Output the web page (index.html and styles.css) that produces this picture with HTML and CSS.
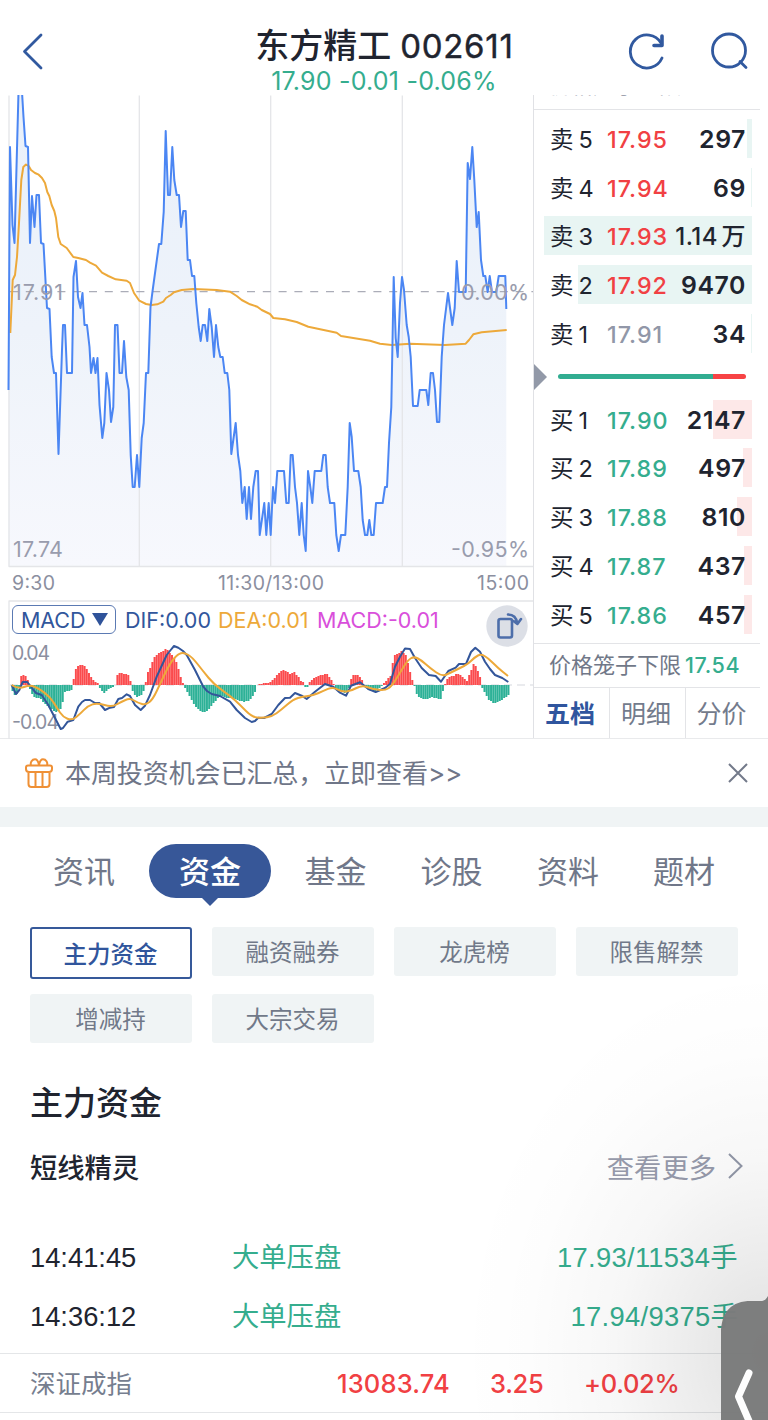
FILE: index.html
```html
<!DOCTYPE html>
<html lang="zh-CN">
<head>
<meta charset="utf-8">
<title>东方精工 002611</title>
<link rel="stylesheet" href="styles.css">
</head>
<body>
<div class="app">
  <header class="header">
    <svg class="back" width="24" height="40" viewBox="0 0 24 40"><path d="M20 4 3.500 20.500 20 37"/></svg>
    <div class="title">
      <h1>东方精工 <span class="code">002611</span></h1>
      <p>17.90 -0.01 -0.06%</p>
    </div>
    <div class="actions">
      <svg width="40" height="40" viewBox="0 0 40 40"><path d="M35 27A16.500 16.500 0 1 1 34 12"/><path d="M35 5v9.500H27" stroke-width="3.600"/></svg>
      <svg width="40" height="40" viewBox="0 0 40 40"><circle cx="19" cy="19.500" r="16.500"/><path d="m30 30.500 6 6"/></svg>
    </div>
  </header>

  <main class="market">
    <section class="charts">
      <svg class="chart" width="533" height="644" viewBox="0 95 533 644">
        <defs>
          <linearGradient id="area" x1="0" y1="95" x2="0" y2="566" gradientUnits="userSpaceOnUse">
            <stop offset="0" stop-color="#e9f0fa"/><stop offset=".5" stop-color="#eef3fa"/><stop offset="1" stop-color="#f7f8fd"/>
          </linearGradient>
        </defs>
        <path id="fill" fill="url(#area)"/>
        <path class="grid" d="M9 95.500V566.500H533M139.300 95.500V566M270.700 95.500V566M402.300 95.500V566M9 739V601H533"/>
        <path class="zero" d="M10 291.700H533"/>
        <polyline class="average" points="10.300,333 12.700,280 15,275 17,257 19,223 21.300,180 23.300,167 26,164.500 28.700,166 31,170 35,173 38.700,174.700 42,178 45,183 47.300,192 49.300,196 51.700,205 54.300,211 56,218 58.300,237 60.700,244 66.700,248 73.300,257 78.300,258 86,260 90,262.700 96,265.700 102,272.700 108.300,276 115.700,279.300 126.700,280.700 130,283 134,293 139.300,300.700 146,304 151.700,305 157.300,304.300 163.300,301.700 166,298 170.700,295 174,292.300 181.700,290 193.300,289 216.700,290 230,291.700 236.700,296 241.700,300 250,304.300 257.300,306.700 261.700,310 270,314 273.300,318 285,319.300 296.700,322 308.300,326.700 336.700,332.700 341,336 370,340.700 380,343.700 391.700,345 410,343.700 445,345 465.700,343.700 469,340 473.300,334.300 481.700,332.300 506.700,330"/>
        <polyline id="price" class="price" points="8.500,390 10,147 12.500,225 14.500,243 18.500,92 22,92 23.500,117 25.500,146 28,147 30,243 32,196 34.500,227 36.500,195 39,195 41,243 43.500,244 47,308 49.500,309 51.700,357 54,373 56,373 58.500,454 62,350 63,325 65,325 67,373 72,373 73.500,277 76,261 78,297 80.500,308 82.500,293 84.500,325 87,325 89.500,347 91,373 93.500,358 95.500,373 97.500,358 99.500,405 102.300,438 104.300,423 106.500,373 109,390 111,422 113.300,407 115,325 117.500,325 119.500,373 122,373 124,341 126.300,377 128.700,390 130.700,455 132.700,487 134.700,487 137,455 139.300,487 141.700,438 143.700,423 146,373 148.300,373 150.500,307 152.700,290 159,244 161.300,244 163.700,212 165.700,131 168,195 170,195 172.300,147 174.300,180 176.700,195 179,195 181,227 183.300,211 185.700,211 187.700,260 190,260 192,276 194.300,276 196.300,303 198.700,327 200.700,341 202.700,325 205,325 207.300,341 209.300,309 211.700,327 214,357 216,325 218.300,347 220.300,357 222.700,357 224.700,373 227.300,373 229.300,390 231.300,454 235.700,423 238,455 240.300,471 242.300,503 244.700,487 246.700,519 249,487 251,519 253.300,487 255.700,471 258,471 259.700,535 264.300,503 266.300,535 268.700,503 270.700,535 273,487 275,503 277.300,471 284,471 286.300,503 288.700,503 290.700,455 292.700,455 295,487 297,503 299.300,535 301.700,503 303.700,535 305.700,551 308,471 310.300,487 312.300,503 314.700,471 321.300,471 323.300,455 325.700,455 327.700,487 330,503 334.300,503 336.300,535 338.700,551 341,535 345.300,535 347.700,487 349.700,423 351.700,437 354,471 358.300,471 360.700,487 362.700,520 365,535 367.300,535 369.300,520 371.300,535 373.700,535 376,503 382.700,503 385,487 387,487 389,443 391.300,407 393.700,277 395.700,338 397.700,357 400,303 402,277 404,290 406.700,325 408.700,337 410.700,357 413,406 417.700,406 419.700,390 426.300,390 428.300,405 430.700,373 433,373 435,390 437,422 439.300,422 441.700,357 444,325 448,293 452.300,325 454.700,308 456.700,261 459,292 465.700,292 467.700,163 470,179 472.300,147 474.300,180 476.700,227 478.700,212 481,260 483.300,276 485.300,276 487.700,292 489.700,276 492,292 496.300,292 498.700,276 505.300,276 506.300,309"/>
        <g class="label">
          <text x="13" y="299.500" textLength="50">17.91</text>
          <text x="461" y="299.500" textLength="68">0.00%</text>
          <text x="13" y="557" textLength="50">17.74</text>
          <text x="451" y="557" textLength="78">-0.95%</text>
        </g>
        <g class="label time">
          <text x="12" y="590" textLength="43">9:30</text>
          <text x="218" y="590" textLength="106">11:30/13:00</text>
          <text x="477" y="590" textLength="52">15:00</text>
          <text x="12" y="660" textLength="38">0.04</text>
          <text x="12" y="729" textLength="47">-0.04</text>
        </g>
        <path d="M10 685H533" stroke="#e4e5e9" stroke-width="1.500" stroke-dasharray="8 5"/>
        <path id="rise" stroke="#fb4b4d" stroke-width="1.950"/>
        <path id="fall" stroke="#2db197" stroke-width="1.950"/>
        <polyline class="dif" points="11.700,685 16,694 19.300,690 22.700,682 27.300,682 32.700,689 36,693 41.700,695 48.300,705 55,718 60.700,729 63,728 67.700,721.700 73.300,720 78.300,706.700 82,702 85,700 90,700 95,703 99.300,703 105,710 110,707.700 114,707 118.300,699 122,698 126.700,694.300 130,696 135,705 140.700,710 145,705.700 150,695 156.700,676.700 163,663 166.700,655 170.700,650 174,646 178.300,647.700 183,651 186.700,655 195,670 203.300,686.700 207,691 211.700,694 220,696 230,701.700 236.700,710 245,718 251.700,722 255,721 258.300,717.700 264,718 268,716 271.700,714 278.300,705 285,698 290,697.700 295,693 301.700,695.700 306.700,699 315,691.700 325,684 333.300,686.700 340,692.700 346,695.700 351,685.700 360,682.300 368.300,689 375.700,692 385,688 390,684 395,666.700 400,656.700 405,648.500 410,649 415,658 421.700,668 429,675 435.700,676 441,681.700 448.300,671 455.700,667.700 459,664 466,664 471,652 475.300,647.700 480,651.700 485,661.700 490,669 495,675 502.300,678 508.300,682"/>
        <path id="dea" class="average"/>
      </svg>
      <div class="indicator">
        <button class="select">MACD <svg width="16" height="13" viewBox="0 0 16 13"><path d="M0 0H16L8 13Z" fill="#2f539a"/></svg></button>
        <span class="v-dif">DIF:0.00</span>
        <span class="v-dea">DEA:0.01</span>
        <span class="v-macd">MACD:-0.01</span>
      </div>
      <svg class="rotate" width="42" height="42" viewBox="0 0 42 42"><circle cx="21" cy="21" r="20.700" fill="#dcdfe6"/><rect x="12.500" y="14" width="13.500" height="18.500" rx="2" class="ln"/><path class="ln" d="M22 9.500c5.500 0 8.500 3 9.300 9M27.500 16l3.900 2.900L35 14"/></svg>
    </section>

    <aside class="book">
      <div class="cage-top"><span>价格笼子上限</span></div>
      <div class="levels sells">
        <div class="row"><i style="width:5px"></i><span>卖 5</span><b>17.95</b><em>297</em></div>
        <div class="row"><i style="width:1px"></i><span>卖 4</span><b>17.94</b><em>69</em></div>
        <div class="row"><i style="width:208px"></i><span>卖 3</span><b>17.93</b><em class="wan">1.14 万</em></div>
        <div class="row"><i style="width:174px"></i><span>卖 2</span><b>17.92</b><em>9470</em></div>
        <div class="row"><i style="width:1px"></i><span>卖 1</span><b class="flat">17.91</b><em>34</em></div>
      </div>
      <div class="ratio"><svg class="mark" width="13" height="26" viewBox="0 0 13 26"><path d="M0 0 13 13 0 26Z" fill="#9299a8"/></svg><div class="track"></div></div>
      <div class="levels buys">
        <div class="row"><i style="width:39px"></i><span>买 1</span><b>17.90</b><em>2147</em></div>
        <div class="row"><i style="width:9px"></i><span>买 2</span><b>17.89</b><em>497</em></div>
        <div class="row"><i style="width:15px"></i><span>买 3</span><b>17.88</b><em>810</em></div>
        <div class="row"><i style="width:8px"></i><span>买 4</span><b>17.87</b><em>437</em></div>
        <div class="row"><i style="width:8px"></i><span>买 5</span><b>17.86</b><em>457</em></div>
      </div>
      <div class="cage">价格笼子下限<b>17.54</b></div>
      <nav class="book-tabs"><a class="on">五档</a><a>明细</a><a>分价</a></nav>
    </aside>
  </main>

  <div class="notice">
    <svg width="28" height="30" viewBox="0 0 28 30"><path d="M3 7.500H25Q27 7.500 27 9.500V11Q27 14 24 14H4Q1 14 1 11V9.500Q1 7.500 3 7.500ZM3.500 14V26Q3.500 29 6.500 29H21.500Q24.500 29 24.500 26V14M10.500 14V29M17.500 14V29M6 7.500C5 4.500 7 1.200 10 1.200S13.500 4 14 7.500C14.500 4 15 1.200 18 1.200S23 4.500 22 7.500"/></svg>
    <span>本周投资机会已汇总，立即查看&gt;&gt;</span>
    <svg class="close" width="20" height="20" viewBox="0 0 20 20"><path d="m1 1 18 18M19 1 1 19"/></svg>
  </div>
  <div class="gap"></div>

  <nav class="tabs"><a>资讯</a><a class="on">资金</a><a>基金</a><a>诊股</a><a>资料</a><a>题材</a></nav>
  <nav class="chips"><a class="on">主力资金</a><a>融资融券</a><a>龙虎榜</a><a>限售解禁</a><a>增减持</a><a>大宗交易</a></nav>

  <section class="funds">
    <h2>主力资金</h2>
    <div class="sub"><h3>短线精灵</h3><a>查看更多 <svg width="15" height="26" viewBox="0 0 15 26"><path d="m1 1 12.500 12L1 25"/></svg></a></div>
    <div class="deal"><time>14:41:45</time><span>大单压盘</span><b>17.93/11534手</b></div>
    <div class="deal"><time>14:36:12</time><span>大单压盘</span><b>17.94/9375手</b></div>
  </section>
  <footer class="index"><span>深证成指</span><b>13083.74</b><b>3.25</b><b>+0.02%</b></footer>

  <div class="shade"></div>
  <svg class="drawer" width="48" height="126" viewBox="0 0 48 126"><path d="M0 126V40C0 17 11 7 30 7H41Q45 7 48 0V126Z" fill="#7b7c7c"/><path d="M28 79 17.500 102.500 28 127" fill="none" stroke="#fff" stroke-width="7" stroke-linecap="round" stroke-linejoin="round"/></svg>
</div>
<script src="chart.js"></script>
</body>
</html>
```

FILE: styles.css
```css
* { box-sizing: border-box; }
body { margin: 0; background: #fff; color: #20242f; font-family: Inter, "Noto Sans CJK SC", sans-serif; }
h1, h2, h3, p { margin: 0; font-weight: 400; }
b, em, i { font-style: normal; }
.app { position: relative; width: 768px; height: 1420px; overflow: hidden; display: flex; flex-direction: column; }
.app > * { flex-shrink: 0; }

.header { height: 95px; display: grid; grid-template-columns: 180px 408px 180px; }
.header svg { fill: none; stroke: #31599f; stroke-width: 2.8; stroke-linecap: round; stroke-linejoin: round; }
.back { margin: 31px 0 0 21px; }
.title { text-align: center; padding-top: 23px; }
.title h1 { font-size: 34px; line-height: 45px; font-weight: 500; white-space: nowrap; }
.title .code { font-size: 33px; font-weight: 400; letter-spacing: .7px; margin-right: -.7px; -webkit-text-stroke: .4px; }
.title p { font-size: 25px; line-height: 25px; color: #35ad8e; letter-spacing: .22px; }
.actions { display: flex; gap: 43px; padding: 31px 0 0 39px; }

.market { height: 644px; display: grid; grid-template-columns: 533px 235px; border-bottom: 1px solid #e9eaec; }
.charts { position: relative; height: 644px; }
.chart { display: block; }
.chart path, .chart polyline { stroke-linejoin: round; }
.grid { fill: none; stroke: #e4e5e8; stroke-width: 1.3; }
.zero { stroke: #abadb8; stroke-width: 1.3; stroke-dasharray: 8 7.8; }
.price { fill: none; stroke: #4b86f3; stroke-width: 2; }
.average { fill: none; stroke: #eda93a; stroke-width: 2; }
.dif { fill: none; stroke: #33569a; stroke-width: 2; }
.label { font-size: 21.5px; fill: #999cad; }
.time { font-size: 19.5px; fill: #8b8f9f; }
.indicator { position: absolute; left: 12px; top: 510px; display: flex; align-items: center; height: 29px; font-size: 21.5px; white-space: nowrap; }
.select { display: flex; flex-shrink: 0; align-items: center; gap: 7px; width: 104px; height: 29px; padding: 0 0 0 8px; margin-right: 9px; border: 1.5px solid #5b7ab3; border-radius: 6px; background: #fff; color: #31569c; font: inherit; letter-spacing: -.1px; }
.select svg { flex-shrink: 0; }
.v-dif { width: 93px; color: #31569c; }
.v-dea { width: 99px; color: #eda93a; }
.v-macd { color: #d94fdb; }
.rotate { position: absolute; left: 486px; top: 510px; }
.ln { fill: none; stroke: #4d6eaa; stroke-width: 2.6; stroke-linecap: round; stroke-linejoin: round; }

.book { border-left: 1.3px solid #e0e1e5; display: flex; flex-direction: column; height: 643px; }
.book > * { flex-shrink: 0; }
.cage-top { height: 15px; width: 226px; border-bottom: 1px solid #e3e4e7; position: relative; }
.cage-top span { position: absolute; left: 15px; top: -26px; font-size: 22px; line-height: 32px; color: #8b8f9f; clip-path: inset(26px 0 0 0); }
.levels { display: grid; grid-auto-rows: 39px; row-gap: 9.7px; padding: 9px 0 0; }
.row { position: relative; width: 208px; margin-left: 10px; display: grid; grid-template-columns: 57px 62px 83px; padding: 2px 0 0 6px; align-items: center; line-height: 37px; white-space: nowrap; }
.row i { position: absolute; right: 0; top: 0; height: 39px; background: #e8f5f3; }
.buys .row i { background: #fde8e8; }
.row span, .row b, .row em { position: relative; }
.row span { font-size: 23.5px; word-spacing: -1.5px; }
.row b { font-size: 23.3px; font-weight: 500; color: #f14043; letter-spacing: 1px; }
.row em { font-size: 24.8px; font-weight: 600; text-align: right; margin-left: -16px; width: 93px; letter-spacing: .6px; }
.row .wan { font-size: 24px; font-weight: 500; word-spacing: -3px; letter-spacing: .4px; }
.row .flat { color: #9197a8; }
.buys b, .cage b { color: #35ad8e; }
.ratio { height: 47px; position: relative; padding: 21px 0 0 24px; }
.mark { position: absolute; left: 0; top: 11px; }
.track { width: 188px; height: 5.5px; border-radius: 3px; background: linear-gradient(90deg, #31ad91 82.3%, #f74345 82.3%); }
.buys { padding-top: 0; }
.cage { width: 226px; height: 45px; margin-top: 9px; border-top: 1.3px solid #e3e4e7; border-bottom: 1.3px solid #e3e4e7; padding-left: 15px; font-size: 22px; line-height: 43px; color: #717888; white-space: nowrap; }
.cage b { font-size: 21.5px; font-weight: 500; margin-left: 4px; letter-spacing: .6px; }
.book-tabs { display: grid; grid-template-columns: 75px 76px 75px; height: 50px; font-size: 25px; line-height: 52px; text-align: center; color: #737b8c; }
.book-tabs a { height: 50px; padding-right: 3px; }
.book-tabs a + a { border-left: 1.3px solid #e3e4e7; }
.book-tabs .on { color: #2f559e; font-weight: 700; }

.notice { height: 68px; display: flex; align-items: center; padding: 0 20px 0 25px; font-size: 26px; color: #6f7688; }
.notice svg { fill: none; stroke: #ef9035; stroke-width: 2; }
.notice span { margin-left: 12px; padding-bottom: 3px; letter-spacing: -.08px; }
.notice .close { margin-left: auto; stroke: #737a8a; }
.gap { height: 20px; background: #f0f4f5; }

.tabs { height: 100px; padding: 17px 26px 0; display: grid; grid-template-columns: 116px 136px 115px 117px 116px 116px; font-size: 31px; line-height: 56px; text-align: center; color: #707789; }
.tabs a { height: 54px; }
.tabs .on { position: relative; justify-self: center; width: 122px; border-radius: 27px; background: #375798; color: #fff; font-weight: 500; }
.tabs .on::after { content: ""; position: absolute; left: 52px; top: 53px; border: 9px solid transparent; border-top-color: #375798; border-bottom: 0; }
.chips { height: 117px; padding: 0 30px; display: grid; grid-template-columns: repeat(4, 162px); grid-auto-rows: 49px; gap: 18px 20px; font-size: 23.5px; line-height: 52px; text-align: center; color: #717989; }
.chips a { background: #f0f4f5; border-radius: 3px; padding-right: 1px; }
.chips .on { height: 52px; background: #fff; border: 2px solid #36599a; color: #30559c; font-weight: 500; line-height: 51px; }

.funds { height: 309px; padding: 35px 30px 0; }
h2 { font-size: 33px; line-height: 48px; font-weight: 500; }
.sub { display: flex; justify-content: space-between; align-items: center; margin-top: 19px; height: 40px; margin-right: -5px; }
h3 { font-size: 27.3px; font-weight: 500; }
.sub a { display: flex; align-items: center; gap: 12px; font-size: 27.3px; color: #979bac; }
.sub svg { fill: none; stroke: #9298a8; stroke-width: 2; }
.deal { display: grid; grid-template-columns: 202px 190px 1fr; align-items: center; height: 59px; font: 27.3px/59px "Liberation Sans", "Noto Sans CJK SC", sans-serif; }
.sub + .deal { margin-top: 42px; }
.deal span, .deal b { color: #35ad8e; font-weight: 400; }
.deal b { text-align: right; letter-spacing: .32px; }
.index { height: 60px; border-top: 1.3px solid #e4e6e8; border-bottom: 1.3px solid #e4e6e8; padding: 0 30px 3px; display: grid; grid-template-columns: 307px 153px 94px 1fr; align-items: center; font-size: 25.5px; color: #767e8f; }
.index b { color: #f14043; font-weight: 500; padding-top: 3px; letter-spacing: .15px; }
.index b + b { letter-spacing: -.3px; }

.shade { position: absolute; right: 0; bottom: 0; width: 400px; height: 450px; background: radial-gradient(ellipse 310px 390px at 100% 85%, rgba(0,0,0,.12), rgba(0,0,0,.075) 25%, rgba(0,0,0,.03) 50%, rgba(0,0,0,.008) 78%, transparent); }
.drawer { position: absolute; right: -1px; bottom: 0; opacity: .98; }
```

FILE: chart.js
```javascript
// Close the price line down to the axis to make the shaded area.
const price = document.getElementById('price').getAttribute('points');
document.getElementById('fill').setAttribute('d', 'M8.5,566 L' + price + ' L506.3,566 Z');

// MACD histogram envelope: x position, bar height.
const macd = [[12,-5],[15.5,-12],[18,-6],[20,2],[21.5,10],[25,10],[27.5,6],[29,-1],[31,-8],[35,-13],[40,-13],[45,-19],[50,-23],[55,-27],[60,-26],[62.5,-18],[65,-7],[72,-5],[73,-2],[74,10],[77,19],[82,20],[86,18],[89,12],[92,6],[96,3],[99,2],[100,-3],[104,-8],[107,-6],[110,-3],[115,-2],[116,8],[119,12],[125,11],[129,10],[131,2],[133,-7],[136,-12],[141,-11],[144,-5],[146,4],[148,13],[151,19],[154,27],[158,31],[162,34],[165,34],[166.5,40],[168,34],[172,30],[175,26],[178,19],[180,10],[182,4],[184,-1],[187,-6],[191,-14],[196,-22],[200,-26],[204,-28],[208,-25],[212,-20],[217,-14],[222,-11],[228,-13],[235,-14],[240,-16],[245,-17],[250,-15],[254,-10],[256,-4],[258,2],[261,0],[263,2],[267,2],[270,3],[274,6],[278,11],[283,15],[287,14],[290,11],[294,13],[298,9],[301,4],[304,2],[306,-4],[308,-1],[309,2],[315,8],[321,10],[327,11],[330,7],[333,3],[335,-2],[340,-6],[346,-8],[349,-3],[351,6],[354,11],[359,9],[363,4],[365,-2],[370,-6],[376,-6],[380,-3],[383,1],[386,4],[391,10],[393,24],[394,30],[399,32],[402,34],[406,30],[408,22],[411,10],[413,3],[415,-2],[417,-10],[422,-14],[428,-14],[432,-12],[436,-13],[441,-14],[443,-6],[446,4],[450,9],[454,9],[457,12],[462,9],[467,4],[470,12],[474,22],[477,16],[480,8],[482,-2],[485,-8],[489,-15],[494,-18],[499,-17],[504,-13],[509,-10]];
let rise = '', fall = '', k = 0;
for (let x = 12.5; x < 509; x += 2.185) {
  while (macd[k + 1][0] < x) k++;
  const [a, b] = [macd[k], macd[k + 1]];
  const h = Math.round(a[1] + (b[1] - a[1]) * (x - a[0]) / (b[0] - a[0]));
  const bar = `M${x.toFixed(2)} 685v${-h}`;
  if (h > 0) rise += bar; else fall += bar;
}
document.getElementById('rise').setAttribute('d', rise);
document.getElementById('fall').setAttribute('d', fall);

// Signal line, smoothed through midpoints.
const dea = [[11.7,685],[18,689],[30,685],[38,688],[50,696.7],[57,708],[63,717],[72,720.5],[80,714],[88,705.7],[97,703],[112,707],[121,702],[130,698],[138,703],[146,705],[153,699],[160,684],[170,663],[178,654],[184,652.5],[192,657],[203,671],[214,684.5],[230,695.7],[240,705],[252,717],[262,718],[272,716.5],[281,710],[293,699.5],[303,696.5],[313,695.5],[323,691],[333,686.7],[342,692],[351,691],[362,685],[372,689],[385,690.5],[392,686],[401,671],[408,660],[414,656.5],[421,660],[430,668],[442,676.5],[450,673],[460,668],[468,664],[475,657],[481,654],[488,658],[498,668],[508,676]];
let d = `M${dea[0]}`;
for (let i = 1; i < dea.length - 1; i++) {
  const [p, q] = [dea[i], dea[i + 1]];
  d += ` Q${p} ${(p[0] + q[0]) / 2},${(p[1] + q[1]) / 2}`;
}
document.getElementById('dea').setAttribute('d', d + ` L${dea[dea.length - 1]}`);
```
